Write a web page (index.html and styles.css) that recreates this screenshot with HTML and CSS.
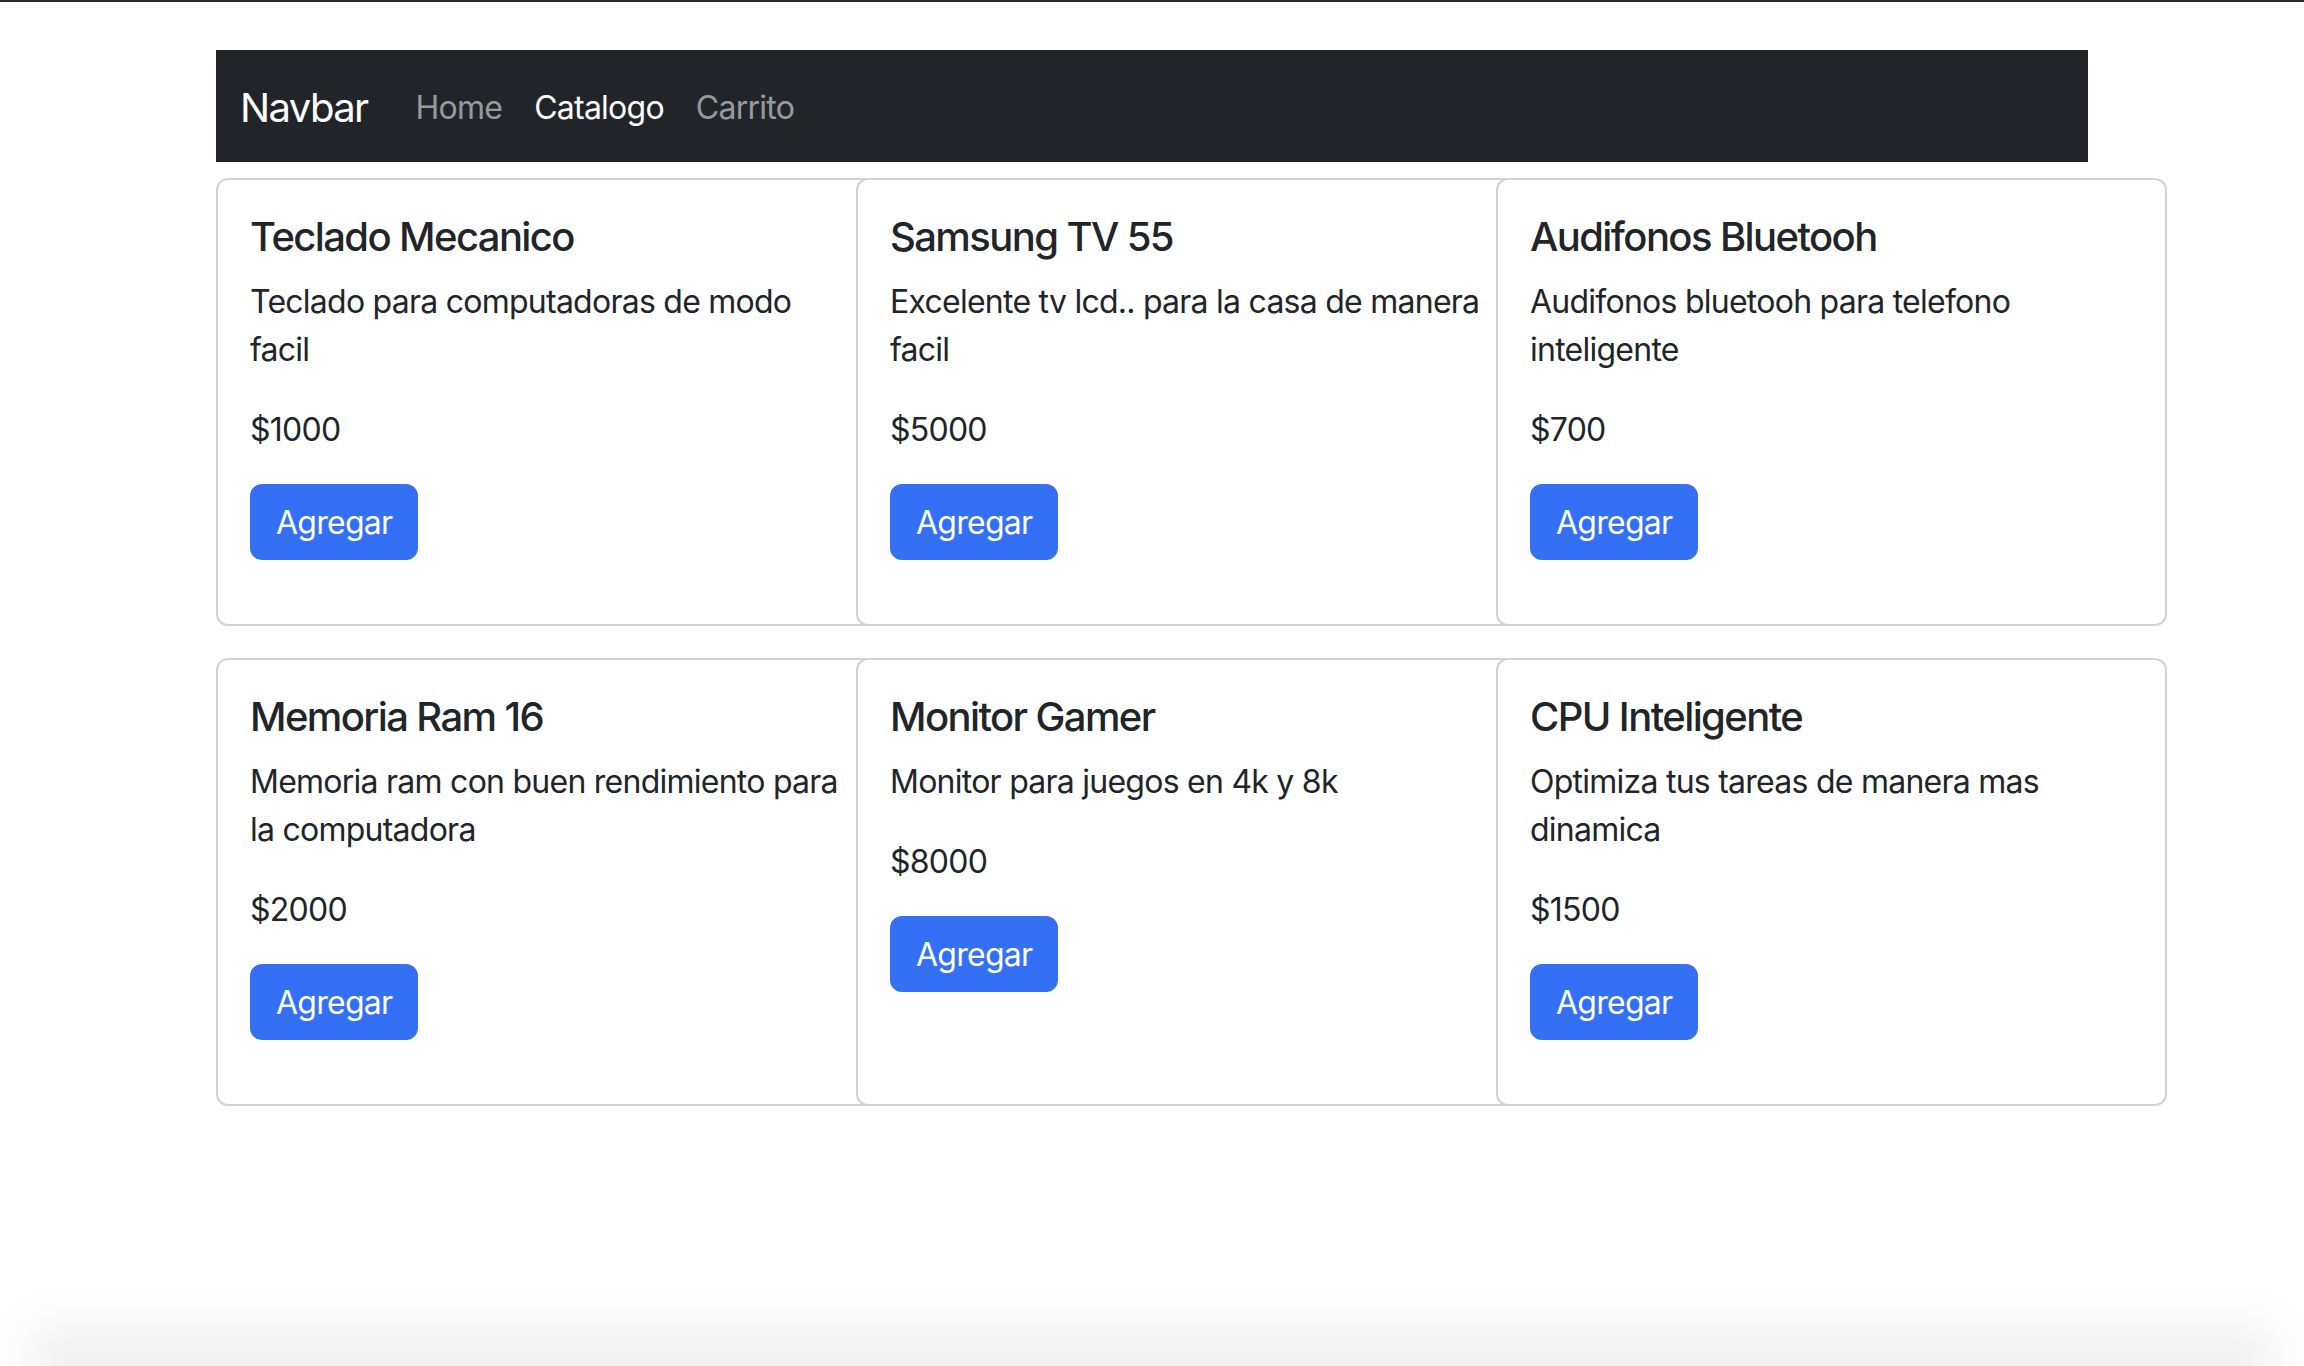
FILE: index.html
```html
<!DOCTYPE html>
<html lang="es">
<head>
<meta charset="utf-8">
<title>Catalogo</title>
<link rel="stylesheet" href="styles.css">
</head>
<body>
<div class="container">
  <nav class="navbar">
    <div class="navbar-inner">
      <a class="brand" href="#">Navbar</a>
      <ul class="nav">
        <li><a class="nav-link" href="#">Home</a></li>
        <li><a class="nav-link active" href="#">Catalogo</a></li>
        <li><a class="nav-link" href="#">Carrito</a></li>
      </ul>
    </div>
  </nav>
  <div class="grid">
    <div class="card"><div class="card-body">
      <h5 class="card-title">Teclado Mecanico</h5>
      <p class="card-text">Teclado para computadoras de modo facil</p>
      <p class="card-text">$1000</p>
      <p class="card-action"><a class="btn" href="#">Agregar</a></p>
    </div></div>
    <div class="card"><div class="card-body">
      <h5 class="card-title">Samsung TV 55</h5>
      <p class="card-text">Excelente tv lcd.. para la casa de manera facil</p>
      <p class="card-text">$5000</p>
      <p class="card-action"><a class="btn" href="#">Agregar</a></p>
    </div></div>
    <div class="card"><div class="card-body">
      <h5 class="card-title">Audifonos Bluetooh</h5>
      <p class="card-text">Audifonos bluetooh para telefono inteligente</p>
      <p class="card-text">$700</p>
      <p class="card-action"><a class="btn" href="#">Agregar</a></p>
    </div></div>
    <div class="card"><div class="card-body">
      <h5 class="card-title">Memoria Ram 16</h5>
      <p class="card-text">Memoria ram con buen rendimiento para la computadora</p>
      <p class="card-text">$2000</p>
      <p class="card-action"><a class="btn" href="#">Agregar</a></p>
    </div></div>
    <div class="card"><div class="card-body">
      <h5 class="card-title">Monitor Gamer</h5>
      <p class="card-text">Monitor para juegos en 4k y 8k</p>
      <p class="card-text">$8000</p>
      <p class="card-action"><a class="btn" href="#">Agregar</a></p>
    </div></div>
    <div class="card"><div class="card-body">
      <h5 class="card-title">CPU Inteligente</h5>
      <p class="card-text">Optimiza tus tareas de manera mas dinamica</p>
      <p class="card-text">$1500</p>
      <p class="card-action"><a class="btn" href="#">Agregar</a></p>
    </div></div>
  </div>
</div>
<div class="window-shadow"></div>
</body>
</html>
```

FILE: styles.css
```css
html, body {
  margin: 0;
  padding: 0;
  background: #fff;
}
body {
  border-top: 2px solid #2a2b2e;
  font-family: Inter, "Noto Sans", sans-serif;
  font-size: 32px;
  line-height: 48px;
  letter-spacing: -0.75px;
  color: #212529;
  height: 1364px;
  overflow: hidden;
}
.container {
  width: 1920px;
  margin: 0 auto;
  padding: 48px 24px 0;
  box-sizing: border-box;
}
.navbar {
  background: #212529;
  padding: 16px 0;
}
.navbar-inner {
  display: flex;
  align-items: center;
  padding: 0 24px;
}
.brand {
  font-size: 40px;
  line-height: 60px;
  letter-spacing: -1.6px;
  padding: 12px 0 8px;
  margin-right: 32px;
  color: #fff;
  text-decoration: none;
}
.nav {
  display: flex;
  list-style: none;
  margin: 0;
  padding: 0;
}
.nav-link {
  display: block;
  padding: 18px 16px 14px;
  color: rgba(255, 255, 255, 0.55);
  text-decoration: none;
}
.nav-link.active {
  color: #fff;
}
.grid {
  display: grid;
  grid-template-columns: repeat(3, 640px);
  row-gap: 32px;
  margin-top: 16px;
}
.card {
  width: 671px;
  box-sizing: border-box;
  background: #fff;
  border: 2px solid rgba(0, 0, 0, 0.175);
  border-radius: 12px;
}
.card-body {
  padding: 32px;
}
.card-title {
  margin: 0 0 15px;
  padding-top: 1px;
  font-size: 40px;
  font-weight: 500;
  line-height: 48px;
  letter-spacing: -1.6px;
}
.card-text {
  margin: 0 0 30px;
  padding-top: 2px;
}
.card-action {
  margin: 0 0 32px;
}
.btn {
  display: inline-block;
  padding: 13px 24px 11px;
  font-size: 32px;
  line-height: 48px;
  color: #fff;
  background: #3470f4;
  border: 2px solid #3470f4;
  border-radius: 12px;
  text-decoration: none;
  vertical-align: top;
}
.window-shadow {
  position: fixed;
  left: 30px;
  right: 30px;
  bottom: -30px;
  height: 70px;
  background: rgba(0, 0, 0, 0.06);
  filter: blur(25px);
  pointer-events: none;
}
```
